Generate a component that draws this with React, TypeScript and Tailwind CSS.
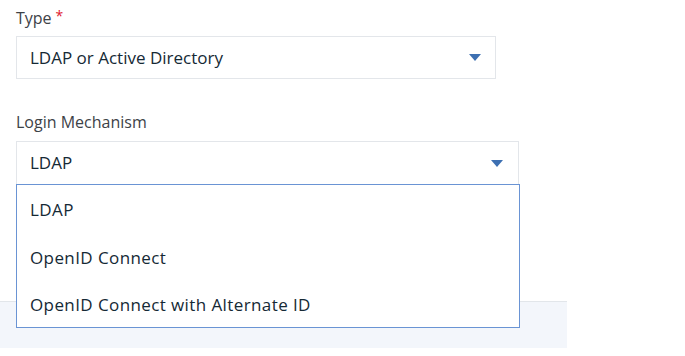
export default function App() {
  const options = ["LDAP", "OpenID Connect", "OpenID Connect with Alternate ID"]

  return (
    <div
      className="w-[685px] h-[356px] bg-white text-[#152935] overflow-hidden"
      style={{ fontFamily: '"Open Sans", "Noto Sans", sans-serif' }}
    >
      <div className="px-4 pt-[7px]">
        <label className="flex items-center gap-1 text-[16px] text-[#3d4247] h-[22px]">
          Type <span className="text-[#e0182d] text-[14px] leading-none -mt-1">*</span>
        </label>
        <div className="mt-[7px] w-[480px] h-[43px] border border-[#e3e6ea] flex items-center justify-between pl-[13px] pr-[14px] text-[17px]">
          <span>LDAP or Active Directory</span>
          <Caret />
        </div>

        <label className="block mt-[32px] text-[16px] text-[#3d4247] h-[22px] leading-[22px]">Login Mechanism</label>
        <div className="relative mt-[8px] w-[503px]">
          <div className="h-[43px] border border-[#e3e6ea] border-b-0 flex items-center justify-between pl-[13px] pr-[15px] text-[17px]">
            <span>LDAP</span>
            <Caret />
          </div>
          <ul className="absolute left-0 top-full z-10 w-[504px] h-[144px] bg-white border border-[#6a94d4] text-[17px] tracking-[0.4px] pt-[1px]">
            {options.map((o) => (
              <li key={o} className="h-[47.6px] flex items-center pl-[13px]">
                {o}
              </li>
            ))}
          </ul>
        </div>
      </div>

      <div className="mt-[117px] w-[567px] h-[47px] bg-[#f3f6fb] border-t border-[#e2e6ea]" />
    </div>
  )
}

function Caret() {
  return (
    <svg width="12" height="7" viewBox="0 0 12 7">
      <path d="M0 0h12L6 7z" fill="#3d70b2" />
    </svg>
  )
}
